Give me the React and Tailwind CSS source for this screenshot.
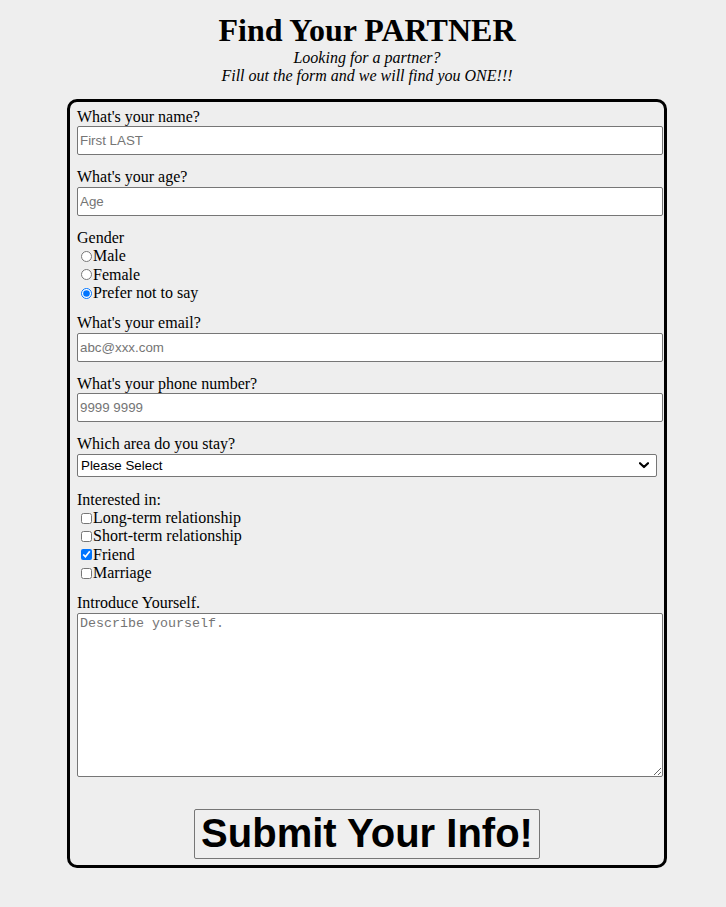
import React from "react";

const inputCls =
  "block w-[586px] h-[29px] border border-[#767676] rounded-[2px] bg-white px-[2px] text-[13.33px] leading-[normal] font-['Liberation_Sans',Arial,sans-serif] text-black placeholder:text-[#757575] outline-none";

function Field({ label, placeholder, className = "" }) {
  return (
    <div className={className}>
      <div className="h-[18.4px]">{label}</div>
      <input type="text" placeholder={placeholder} className={inputCls} />
    </div>
  );
}

function Choice({ type, name, children, checked }) {
  return (
    <label className="flex items-center h-[18.4px]">
      <input
        type={type}
        name={name}
        defaultChecked={checked}
        className="w-[11px] h-[11px] m-0 ml-[4px] mr-[1px] shrink-0"
      />
      <span>{children}</span>
    </label>
  );
}

export default function App() {
  return (
    <div className="min-h-screen bg-[#eeeeee] pl-[8px] pt-[12px] pb-[40px] font-['Liberation_Serif','Times_New_Roman',serif] text-black">
      <h1 className="text-center text-[32px] font-bold leading-[normal]">Find Your PARTNER</h1>
      <p className="text-center italic text-[16px] leading-[normal]">
        Looking for a partner?
        <br />
        Fill out the form and we will find you ONE!!!
      </p>
      <form
        className="mx-auto mt-[14px] w-[600px] border-[3px] border-black rounded-[10px] pl-[7px] pr-[7px] pt-[6px] pb-[6px] text-[16px] leading-[normal]"
        onSubmit={(e) => e.preventDefault()}
      >
        <Field label="What's your name?" placeholder="First LAST" />
        <Field label="What's your age?" placeholder="Age" className="mt-[13px]" />

        <div className="mt-[13px]">
          <div className="h-[18.4px]">Gender</div>
          <Choice type="radio" name="gender">Male</Choice>
          <Choice type="radio" name="gender">Female</Choice>
          <Choice type="radio" name="gender" checked>Prefer not to say</Choice>
        </div>

        <Field label="What's your email?" placeholder="abc@xxx.com" className="mt-[12px]" />
        <Field label="What's your phone number?" placeholder="9999 9999" className="mt-[13px]" />

        <div className="mt-[13px]">
          <div className="h-[18.4px]">Which area do you stay?</div>
          <div className="relative w-[580px]">
            <select
              defaultValue="none"
              className="block w-[580px] h-[23px] appearance-none border border-[#767676] rounded-[2px] bg-white pl-[3px] text-[13.33px] font-['Liberation_Sans',Arial,sans-serif] text-black outline-none"
            >
              <option value="none">Please Select</option>
              <option value="north">North</option>
              <option value="south">South</option>
              <option value="east">East</option>
              <option value="west">West</option>
            </select>
            <svg
              className="pointer-events-none absolute right-[8px] top-[8px]"
              width="10"
              height="7"
              viewBox="0 0 10 7"
              fill="none"
            >
              <path d="M1 1.2 L5 5 L9 1.2" stroke="#000" strokeWidth="2.2" strokeLinecap="round" strokeLinejoin="round" />
            </svg>
          </div>
        </div>

        <div className="mt-[14px]">
          <div className="h-[18.4px]">Interested in:</div>
          <Choice type="checkbox" name="i1">Long-term relationship</Choice>
          <Choice type="checkbox" name="i2">Short-term relationship</Choice>
          <Choice type="checkbox" name="i3" checked>Friend</Choice>
          <Choice type="checkbox" name="i4">Marriage</Choice>
        </div>

        <div className="mt-[12px]">
          <div className="h-[18.4px]">Introduce Yourself.</div>
          <textarea
            placeholder="Describe yourself."
            className="block w-[586px] h-[164px] border border-[#767676] rounded-[2px] bg-white p-[2px] text-[13.33px] leading-[normal] font-['Liberation_Mono','Courier_New',monospace] text-black placeholder:text-[#757575] outline-none resize"
          />
        </div>

        <button
          type="submit"
          className="block mx-auto mt-[32px] h-[50px] px-[6px] border border-[#767676] rounded-[2px] bg-[#efefef] text-[40px] font-bold leading-[normal] font-['Liberation_Sans',Arial,sans-serif] text-black"
        >
          Submit Your Info!
        </button>
      </form>
    </div>
  );
}
